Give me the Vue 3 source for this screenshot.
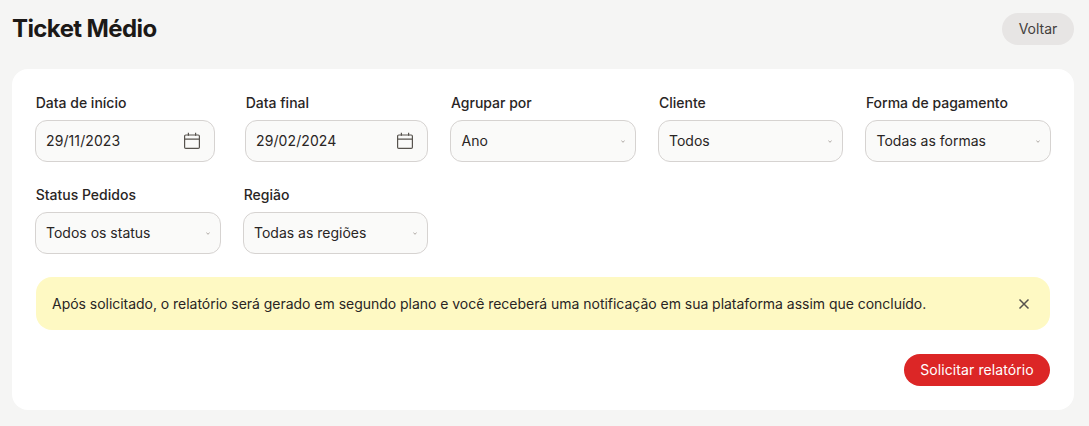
<script setup>
const rows = [
  [
    { label: 'Data de início', value: '29/11/2023', type: 'date', w: 180, gap: 30, pad: 10 },
    { label: 'Data final', value: '29/02/2024', type: 'date', w: 183, gap: 22.3, pad: 10 },
    { label: 'Agrupar por', value: 'Ano', type: 'select', w: 186, gap: 22, pad: 10.2 },
    { label: 'Cliente', value: 'Todos', type: 'select', w: 184.5, gap: 22.4, pad: 9.7 },
    { label: 'Forma de pagamento', value: 'Todas as formas', type: 'select', w: 185.8, gap: 0, pad: 10.3 }
  ],
  [
    { label: 'Status Pedidos', value: 'Todos os status', type: 'select', w: 186, gap: 22, pad: 10 },
    { label: 'Região', value: 'Todas as regiões', type: 'select', w: 185, gap: 0, pad: 10 }
  ]
]
</script>

<template>
  <div class="page">
    <header class="head">
      <h1>Ticket Médio</h1>
      <button class="back">Voltar</button>
    </header>
    <section class="card">
      <div v-for="(row, i) in rows" :key="i" class="row">
        <div
          v-for="f in row"
          :key="f.label"
          class="field"
          :style="{ width: f.w + 'px', marginRight: f.gap + 'px' }"
        >
          <label>{{ f.label }}</label>
          <div class="control" :style="{ paddingLeft: f.pad + 'px' }">
            <span :class="{ digits: f.type === 'date' }">{{ f.value }}</span>
            <svg v-if="f.type === 'date'" class="cal" width="18" height="18" viewBox="0 0 18 18" fill="none" stroke="#57534e" stroke-width="1.2">
              <rect x="1.6" y="3" width="14.8" height="13.4" rx="1.2" />
              <path d="M1.6 7.2h14.8M5.4 0.8v3M12.6 0.8v3" />
            </svg>
            <svg v-else class="chev" width="4" height="3" viewBox="0 0 4 3" fill="none" stroke="#a8a29e" stroke-width="0.9">
              <path d="M0.4 0.5 2 2.3 3.6 0.5" />
            </svg>
          </div>
        </div>
      </div>
      <div class="alert">
        <p>Após solicitado, o relatório será gerado em segundo plano e você receberá uma notificação em sua plataforma assim que concluído.</p>
        <svg width="12" height="12" viewBox="0 0 12 12" fill="none" stroke="#57534e" stroke-width="1.5">
          <path d="M1.5 1.5l9 9M10.5 1.5l-9 9" />
        </svg>
      </div>
      <div class="actions">
        <button class="submit">Solicitar relatório</button>
      </div>
    </section>
  </div>
</template>

<style>
html, body { margin: 0; background: #f5f5f4; }
</style>

<style scoped>
.page {
  box-sizing: border-box;
  width: 1089px;
  height: 426px;
  padding: 13px 15px 16px 12px;
  background: #f5f5f4;
  font-family: Inter, "Liberation Sans", sans-serif;
  color: #1c1917;
  overflow: hidden;
}
.head {
  display: flex;
  align-items: center;
  justify-content: space-between;
  height: 32px;
  margin-bottom: 24px;
}
h1 {
  margin: 0;
  font-size: 24px;
  line-height: 32px;
  font-weight: 700;
  letter-spacing: -0.6px;
}
button {
  border: 0;
  font-family: inherit;
  font-size: 14px;
  line-height: 20px;
  border-radius: 999px;
  height: 32px;
  padding: 0 16px;
}
.back {
  width: 72px;
  padding: 0;
  background: #e7e5e4;
  color: #44403c;
}
.card {
  box-sizing: border-box;
  height: 341px;
  padding: 24px;
  background: #fff;
  border-radius: 16px;
}
.row {
  display: flex;
  height: 69px;
  margin-bottom: 23px;
  margin-left: -1px;
}
.field { display: flex; flex-direction: column; flex: none; }
label {
  font-size: 14px;
  line-height: 20px;
  font-weight: 500;
  margin: 0 0 7px 0.7px;
  white-space: nowrap;
  color: #292524;
}
.control {
  box-sizing: border-box;
  height: 42px;
  display: flex;
  align-items: center;
  justify-content: space-between;
  padding: 0 10px;
  background: #fafaf9;
  border: 1px solid #d6d3d1;
  border-radius: 12px;
  font-size: 14px;
  color: #292524;
}
.control span { margin-top: -1px; }
.control .digits { letter-spacing: 0.1px; }
.cal { margin-right: 3px; }
.alert {
  box-sizing: border-box;
  height: 53px;
  display: flex;
  align-items: center;
  justify-content: space-between;
  padding: 0 20px 0 16px;
  background: #fef9c3;
  border-radius: 16px;
}
.alert p {
  margin: 0;
  font-size: 14px;
  line-height: 20px;
  letter-spacing: -0.03px;
  color: #292524;
}
.actions {
  display: flex;
  justify-content: flex-end;
  margin-top: 24px;
}
.submit {
  width: 146px;
  padding: 0;
  background: #dc2626;
  color: #fff;
  letter-spacing: 0.1px;
}
</style>
